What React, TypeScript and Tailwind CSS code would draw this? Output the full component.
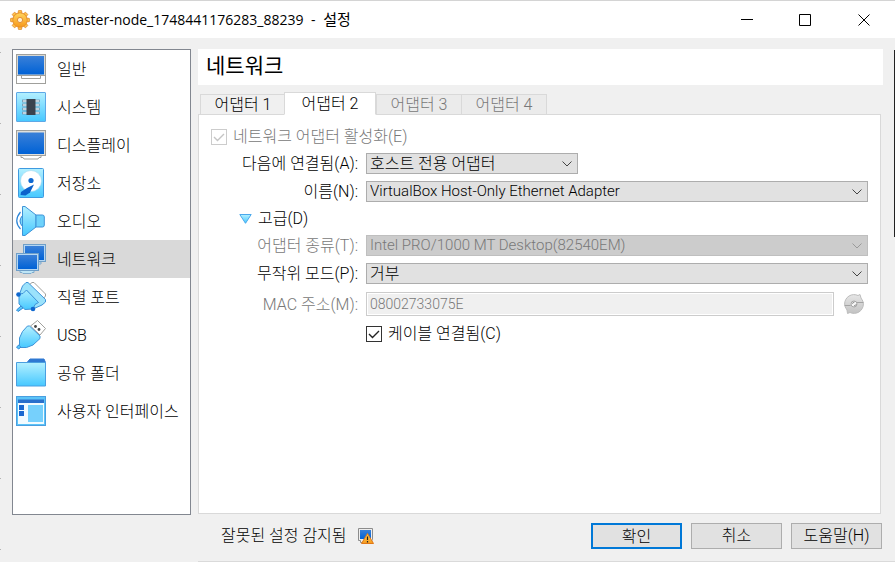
import React, { useState } from 'react';
import clsx from 'clsx';

const Gradients: React.FC = () => (
  <svg width="0" height="0" className="absolute" aria-hidden="true">
    <defs>
      <linearGradient id="screen" x1="0" y1="0" x2="0" y2="1">
        <stop offset="0" stopColor="#3a80d8" />
        <stop offset="1" stopColor="#0062d6" />
      </linearGradient>
      <linearGradient id="sky" x1="0" y1="0" x2="0" y2="1">
        <stop offset="0" stopColor="#b4f0ff" />
        <stop offset="1" stopColor="#46c8ff" />
      </linearGradient>
      <linearGradient id="gold" x1="0" y1="0" x2="0" y2="1">
        <stop offset="0" stopColor="#ffd25a" />
        <stop offset="1" stopColor="#f79a1c" />
      </linearGradient>
      <linearGradient id="silver" x1="0" y1="0" x2="0" y2="1">
        <stop offset="0" stopColor="#e6e6e6" />
        <stop offset="1" stopColor="#c2c2c2" />
      </linearGradient>
    </defs>
  </svg>
);

const GeneralIcon = () => (
  <>
    <rect x="0.5" y="21.5" width="29" height="8" fill="#fff" stroke="#a0a09c" />
    <path d="M5.5 22v2.5h19V22" fill="#fff" stroke="#a0a09c" />
    <rect x="0.5" y="0.5" width="29" height="21" fill="#d8d8d4" stroke="#a0a09c" />
    <rect x="2" y="2" width="26" height="18.5" fill="url(#screen)" />
  </>
);

const SystemIcon = () => (
  <>
    <rect x="0.5" y="0.5" width="29" height="29" rx="0.5" fill="url(#sky)" stroke="#5ea8e6" />
    {[8, 12, 16, 20].map((y) => (
      <rect key={y} x="6.5" y={y} width="17" height="2" fill="#f4fbff" stroke="#7496ae" strokeWidth="0.8" />
    ))}
    <rect x="10.5" y="7" width="9" height="16" fill="#3a424e" />
  </>
);

const DisplayIcon = () => (
  <>
    <path d="M5 25h20v2.5h-2l-1 1.5H8l-1-1.5H5z" fill="#fff" stroke="#a0a09c" />
    <rect x="0.5" y="0.5" width="29" height="25" fill="#e0e0dc" stroke="#a0a09c" />
    <rect x="2" y="2.5" width="26" height="21.5" fill="url(#screen)" />
  </>
);

const StorageIcon = () => (
  <>
    <rect x="2.5" y="0.5" width="25" height="29" rx="1" fill="url(#sky)" stroke="#3e9ae0" />
    <circle cx="15" cy="13" r="10.5" fill="#fff" stroke="#a6d8f0" strokeWidth="0.6" />
    <circle cx="15" cy="12.5" r="2.6" fill="#0f69d2" />
    <path d="M18 16.500 11 20l-6 4-0.500 3 5 0.500 4.500-3z" fill="#0c62cc" />
  </>
);

const AudioIcon = () => (
  <>
    <path d="M4.5 6Q-3 15 4.5 23" fill="none" stroke="#2d86d8" strokeWidth="1.2" />
    <path d="M6.5 9.5Q1.5 15 6.5 20.5z" fill="#7bd8fb" stroke="#2d86d8" />
    <path d="M6.5 0.5h2.500l11 8.500v12l-11 8.500H6.500z" fill="url(#sky)" stroke="#3e93d8" />
    <path d="M20 9h6.500q1.800 0 1.800 2v8q0 2-1.800 2H20z" fill="#6ed2fb" stroke="#3e93d8" />
  </>
);

const NetworkIcon = () => (
  <>
    <rect x="7.5" y="0.5" width="22" height="17" fill="#b4d6f2" stroke="#6f9fc8" />
    <rect x="9" y="2" width="19" height="14" fill="url(#screen)" />
    <path d="M13 18h12v2H13z" fill="#d4e8f4" stroke="#6f9fc8" strokeWidth="0.8" />
    <path d="M4 26.5h14v2h-2l-1 1H7l-1-1H4z" fill="#bfe6f6" stroke="#6f9fc8" strokeWidth="0.8" />
    <rect x="0.5" y="9.5" width="22" height="17" fill="#b4d6f2" stroke="#6f9fc8" />
    <rect x="2" y="11" width="19" height="14" fill="url(#screen)" />
  </>
);

const SerialIcon = () => (
  <>
    <path d="m13 3 3-2.500h2L29.500 12v2L27 17z" fill="#fff" stroke="#a0a09c" />
    <path d="m5 24-4.500 4 1.500 1.500 5-3.500z" fill="#5ac8f8" stroke="#2d86d8" />
    <path d="M3 13 9 6.500l15.500 15L17 27l-8 0.500L3 22z" fill="url(#sky)" stroke="#3e93d8" />
    <path d="m3.500 12 3-8 3.500-3.500h2l17.500 17v2.500L26 23l-9 4 2-4.500 3.500-2L10.500 8 7 11.500z" fill="#9be2fb" stroke="#3e93d8" />
    <circle cx="2.500" cy="12.500" r="2.300" fill="#1068cf" />
    <circle cx="17" cy="27" r="2.300" fill="#1068cf" />
  </>
);

const UsbIcon = () => (
  <>
    <path d="m14.500 6 7-5.500 8 8-5.500 6.500z" fill="#fff" stroke="#a0a09c" />
    <circle cx="19.500" cy="6.500" r="1.400" fill="#444" />
    <circle cx="23" cy="9.500" r="1.400" fill="#444" />
    <path d="m4 24-3.500 3 2 2 4-3z" fill="#5ac8f8" stroke="#2d86d8" />
    <path d="M3.500 25.500V18l3-6.500 5-5.500h2L24 16v2.500l-7 6.500-6.500 2.500H5z" fill="url(#sky)" stroke="#3e93d8" />
  </>
);

const FolderIcon = () => (
  <>
    <path d="M11 4.500 14 1h14l1.500 3.500z" fill="#2f78d2" stroke="#2f78d2" />
    <path d="M0.500 4.500h29V28h-29z" fill="url(#sky)" stroke="#4a9fe0" />
  </>
);

const InterfaceIcon = () => (
  <>
    <rect x="0.5" y="0.5" width="29" height="29" fill="#5cc4f8" stroke="#4a9fe0" />
    <rect x="2" y="7" width="26" height="21" fill="#f2fbff" />
    <rect x="2" y="3.5" width="26" height="3.5" fill="#2a70cc" />
    <rect x="3" y="9" width="5" height="5" fill="#1a68d0" />
    <rect x="3" y="15" width="5" height="5" fill="#1a68d0" />
    <rect x="12" y="9" width="15" height="17" fill="#76d0fc" />
  </>
);

const sections = [
  { name: '일반', Icon: GeneralIcon },
  { name: '시스템', Icon: SystemIcon },
  { name: '디스플레이', Icon: DisplayIcon },
  { name: '저장소', Icon: StorageIcon },
  { name: '오디오', Icon: AudioIcon },
  { name: '네트워크', Icon: NetworkIcon },
  { name: '직렬 포트', Icon: SerialIcon },
  { name: 'USB', Icon: UsbIcon },
  { name: '공유 폴더', Icon: FolderIcon },
  { name: '사용자 인터페이스', Icon: InterfaceIcon },
];

const tabs = [
  { name: '어댑터 1', disabled: false },
  { name: '어댑터 2', disabled: false },
  { name: '어댑터 3', disabled: true },
  { name: '어댑터 4', disabled: true },
];

const TitleBar: React.FC = () => (
  <header className="flex h-[38px] shrink-0 items-center border-t border-[#d4d4d4] bg-white pr-px pl-2.5">
    <svg width="20" height="20" viewBox="0 0 20 20" aria-hidden="true">
      <g fill="url(#gold)" stroke="#e0862c" strokeWidth="0.8">
        {[0, 45, 90, 135, 180, 225, 270, 315].map((a) => (
          <path key={a} d="M7.800 4 8.500 0.600h3L12.200 4z" transform={`rotate(${a} 10 10)`} />
        ))}
        <circle cx="10" cy="10" r="7" />
      </g>
      <circle cx="10" cy="10" r="6.600" fill="url(#gold)" />
      <circle cx="10" cy="10" r="2.600" fill="#fff0d0" stroke="#e0862c" strokeWidth="0.9" />
    </svg>
    <h1 className="ml-[5px] flex-1 truncate font-['Open_Sans','Noto_Sans_CJK_KR',sans-serif] text-[14px] font-normal">
      k8s_master-node_1748441176283_88239 <span className="mx-1">-</span> <span className="text-[15px]">설정</span>
    </h1>
    <div className="flex h-full">
      <button aria-label="최소화" className="grid w-[58px] place-items-center">
        <svg width="12" height="12" viewBox="0 0 12 12" stroke="#000" fill="none"><path d="M0 5.500h12" /></svg>
      </button>
      <button aria-label="최대화" className="grid w-[58px] place-items-center">
        <svg width="12" height="12" viewBox="0 0 12 12" stroke="#000" fill="none"><path d="M0.500 0.500h11v11h-11z" /></svg>
      </button>
      <button aria-label="닫기" className="grid w-[60px] place-items-center">
        <svg width="12" height="12" viewBox="0 0 12 12" stroke="#000" fill="none"><path d="m0.500 0.500 11 11m0-11-11 11" /></svg>
      </button>
    </div>
  </header>
);

interface ComboProps {
  id: string;
  options: string[];
  disabled?: boolean;
  className?: string;
}

const Combo: React.FC<ComboProps> = ({ id, options, disabled, className }) => (
  <div className={clsx('relative', className)}>
    <select
      id={id}
      disabled={disabled}
      className={clsx(
        'block h-[21px] w-full appearance-none border pr-6 pl-[3px] leading-[19px] opacity-100',
        disabled ? 'border-[#bfbfbf] bg-[#cccccc] text-[#787878]' : 'border-[#adadad] bg-[#e1e1e1]',
      )}
    >
      {options.map((o) => (
        <option key={o}>{o}</option>
      ))}
    </select>
    <svg
      className="pointer-events-none absolute top-2 right-1.5"
      width="10"
      height="6"
      viewBox="0 0 10 6"
      fill="none"
      stroke={disabled ? '#9a9a9a' : '#444'}
      aria-hidden="true"
    >
      <path d="m0.500 0.500 4.500 4.500 4.500-4.500" />
    </svg>
  </div>
);

interface CheckProps {
  label: string;
  disabled?: boolean;
}

const Check: React.FC<CheckProps> = ({ label, disabled }) => (
  <label className={clsx('flex h-[19px] items-center gap-1.5', disabled && 'text-[#787878]')}>
    <span className="relative size-4">
      <input
        type="checkbox"
        defaultChecked
        disabled={disabled}
        className={clsx(
          'peer block size-4 appearance-none border bg-white',
          disabled ? 'border-[#cccccc]' : 'border-[#333]',
        )}
      />
      <svg
        className="pointer-events-none invisible absolute inset-0 peer-checked:visible"
        width="16"
        height="16"
        viewBox="0 0 16 16"
        fill="none"
        stroke={disabled ? '#c4c4c4' : '#222'}
        strokeWidth="1.4"
        aria-hidden="true"
      >
        <path d="m3 8 3.500 3.500L13 5" />
      </svg>
    </span>
    {label}
  </label>
);

const NetworkForm: React.FC = () => (
  <div className="flex flex-1 flex-col gap-[7px] border border-[#d9d9d9] bg-white p-3">
    <Check label="네트워크 어댑터 활성화(E)" disabled />
    <div className="grid grid-cols-[147px_1fr] items-center gap-x-2 gap-y-[7px] leading-[19px]">
      <label htmlFor="attached" className="text-right">다음에 연결됨(A):</label>
      <Combo id="attached" options={['호스트 전용 어댑터', 'NAT', '브리지 어댑터']} className="w-[212px]" />

      <label htmlFor="name" className="text-right">이름(N):</label>
      <Combo id="name" options={['VirtualBox Host-Only Ethernet Adapter']} className="text-[15px]" />

      <button aria-expanded="true" className="col-span-2 flex h-[19px] items-center gap-1.5 pl-7">
        <svg width="13" height="10" viewBox="0 0 13 10" aria-hidden="true">
          <path d="M0.800 0.500h11.400L6.500 9.300z" fill="url(#sky)" stroke="#4aa8ec" />
        </svg>
        고급(D)
      </button>

      <label htmlFor="kind" className="text-right text-[#787878]">어댑터 종류(T):</label>
      <Combo id="kind" options={['Intel PRO/1000 MT Desktop(82540EM)']} className="text-[15px]" disabled />

      <label htmlFor="mode" className="text-right">무작위 모드(P):</label>
      <Combo id="mode" options={['거부', '가상 머신 허용', '모두 허용']} />

      <label htmlFor="mac" className="text-right text-[#787878]">MAC 주소(M):</label>
      <div className="flex h-[26px] items-center gap-2.5">
        <input
          id="mac"
          disabled
          defaultValue="08002733075E"
          className="h-6 min-w-0 flex-1 border border-[#cccccc] bg-[#f0f0f0] px-[3px] text-[14px] text-[#787878] outline -outline-offset-2 outline-white"
        />
        <button disabled aria-label="MAC 주소 새로 고침" className="mr-1">
          <svg width="20" height="20" viewBox="0 0 20 20" aria-hidden="true">
            <path
              d="M0.600 10A9.400 9.400 0 0 1 14 1.500l2-1 1 3.500Q19.400 7 19.400 10A9.400 9.400 0 0 1 6 18.500l-2.500 1-0.500-3.500Q0.600 13 0.600 10z"
              fill="url(#silver)"
              stroke="#bcbcbc"
            />
            <path d="M0.600 11.500h6M12 8.500h7.500" stroke="#a4a4a4" />
            <circle cx="10" cy="10" r="3" fill="#f6f6f6" stroke="#a8a8a8" />
            <path d="M8 9.500 10.500 8M10 12l2.500-1.500" stroke="#8c8c8c" />
          </svg>
        </button>
      </div>

      <div className="col-start-2">
        <Check label="케이블 연결됨(C)" />
      </div>
    </div>
  </div>
);

const App: React.FC = () => {
  const [section, setSection] = useState('네트워크');
  const [tab, setTab] = useState('어댑터 2');

  return (
    <div className="relative flex min-h-screen flex-col bg-[#f0f0f0] font-['Roboto','Noto_Sans_CJK_KR',sans-serif] text-[16px] font-light text-black">
      <Gradients />
      <TitleBar />

      <main className="flex flex-1 gap-[7px] px-3 pt-[11px]">
        <nav className="w-[179px] shrink-0 border border-[#828790] bg-white">
          {sections.map(({ name, Icon }) => (
            <button
              key={name}
              onClick={() => setSection(name)}
              aria-current={section === name}
              className={clsx(
                'flex h-[38px] w-full items-center gap-[11px] pl-[3px] whitespace-nowrap',
                section === name && 'bg-[#d9d9d9]',
              )}
            >
              <svg width="30" height="30" viewBox="0 0 30 30" className="shrink-0" aria-hidden="true">
                <Icon />
              </svg>
              <span className="pt-0.5">{name}</span>
            </button>
          ))}
        </nav>

        <section className="flex min-w-0 flex-1 flex-col">
          <h2 className="flex h-9 items-center bg-white pl-2 text-[21px] font-normal">{section}</h2>

          <div className="mt-[7px] mr-0.5 mb-px flex flex-1 flex-col">
            <div role="tablist" className="z-10 -mb-px flex items-end pl-0.5">
              {tabs.map(({ name, disabled }) => (
                <button
                  key={name}
                  role="tab"
                  aria-selected={tab === name}
                  disabled={disabled}
                  onClick={() => setTab(name)}
                  className={clsx(
                    'border border-[#d9d9d9] leading-[19px]',
                    tab === name ? '-ml-px h-[23px] w-[92px] border-b-white bg-white' : '-mr-px h-[21px] w-[86px]',
                    disabled ? 'bg-[#ebebeb] text-[#787878]' : tab !== name && 'bg-[#f0f0f0]',
                  )}
                >
                  {name}
                </button>
              ))}
            </div>
            <NetworkForm />
          </div>
        </section>
      </main>

      <footer className="flex items-center gap-[9px] pt-2 pr-[13px] pb-[13px] pl-[221px]">
        <p className="flex flex-1 items-center gap-[11px]">
          잘못된 설정 감지됨
          <svg width="16" height="16" viewBox="0 0 16 16" aria-hidden="true">
            <path d="M0.500 0.500h14v11l-2 3h-10v-2h-2z" fill="#eee" stroke="#8c8c8c" />
            <rect x="2" y="2" width="11" height="9" fill="url(#screen)" />
            <path d="M9.500 5.500 15.500 15.500H3.500z" fill="url(#gold)" stroke="#e07818" />
            <path d="M9.500 8.500v3.500m0 1v1.500" stroke="#222" strokeWidth="1.2" />
          </svg>
        </p>
        <button className="h-[26px] w-[91px] border-2 border-[#0078d7] bg-[#e1e1e1]">확인</button>
        <button className="h-[26px] w-[91px] border border-[#adadad] bg-[#e1e1e1]">취소</button>
        <button className="h-[26px] w-[91px] border border-[#adadad] bg-[#e1e1e1]">도움말(H)</button>
      </footer>

      {/* edges of the windows behind the dialog */}
      <div className="absolute top-[52px] bottom-0 left-0 w-px bg-[repeating-linear-gradient(#b4b4b4_0_1px,transparent_1px_71px)]" />
      <div className="absolute top-[50px] right-0 h-[187px] w-px bg-[#222]" />
      <div className="absolute right-0 bottom-0 left-[198px] h-px bg-[#dadada]" />
    </div>
  );
};

export default App;
